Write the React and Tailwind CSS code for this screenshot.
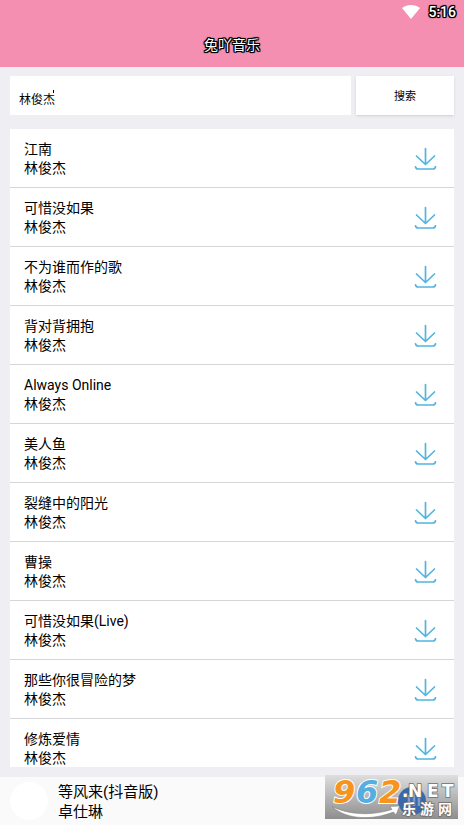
import { useState } from 'react';

const ARTIST = '林俊杰';

const SONGS = [
  '江南',
  '可惜没如果',
  '不为谁而作的歌',
  '背对背拥抱',
  'Always Online',
  '美人鱼',
  '裂缝中的阳光',
  '曹操',
  '可惜没如果(Live)',
  '那些你很冒险的梦',
  '修炼爱情',
];

const OUTLINE =
  '[text-shadow:1px_0_#000,-1px_0_#000,0_1px_#000,0_-1px_#000,1px_1px_#000,-1px_-1px_#000,1px_-1px_#000,-1px_1px_#000,0_0_2px_#000,0_0_2px_#000,0_0_2px_#000]';

function DownloadIcon() {
  return (
    <svg width="24" height="24" viewBox="0 0 24 24" fill="none" stroke="#52b4df" strokeWidth="1.700" strokeLinecap="round" strokeLinejoin="round">
      <path d="M12.500 1.500v15.500M3.500 9l9 8.500 9-8.500" />
      <path d="M2.500 19.800c.4 1.700 1.200 2.200 2.700 2.200h14.600c1.500 0 2.300-.5 2.700-2.200" />
    </svg>
  );
}

function Watermark() {
  return (
    <svg className="block h-11 w-[133px] overflow-visible" viewBox="0 0 133 44" role="img" aria-label="962.NET 乐游网">
      <defs>
        <linearGradient id="plate" x1="0" y1="0" x2="0" y2="1">
          <stop offset="0" stopColor="#dededf" />
          <stop offset="1" stopColor="#8e8e8e" />
        </linearGradient>
      </defs>
      <rect width="133" height="44" fill="url(#plate)" />
      <circle cx="87" cy="26" r="14" fill="#3a68ad" />
      <path d="M84 31V20M89 31V17M94 31v-9" stroke="#7f9dcb" strokeWidth="2.500" />
      <g fontFamily="'DejaVu Sans', sans-serif" fontWeight="700" fontStyle="italic" fontSize="32" stroke="#fff" strokeWidth="2" paintOrder="stroke">
        <text x="8" y="28" fill="#f7941d">9</text>
        <text x="31" y="28" fill="#56ade0">6</text>
        <text x="54" y="28" fill="#f7941d">2</text>
      </g>
      <path d="M7 31.500c18 9 41 9 60 3l-2-3 9.500-.5-3.500 9-2.500-3c-20 8-46 8.500-61.500-5.500z" fill="#fff" stroke="#777" strokeWidth=".5" />
      <g fill="#fff" stroke="#6d6d6d" strokeWidth="1.500" paintOrder="stroke" fontWeight="700">
        <g fontFamily="'DejaVu Sans', sans-serif" fontSize="17">
          <text x="77" y="22">.</text>
          <text x="83" y="22">N</text>
          <text x="102" y="22">E</text>
          <text x="117" y="22">T</text>
        </g>
        <g fontFamily="'Noto Sans CJK SC', sans-serif" fontSize="14">
          <text x="77" y="39">乐</text>
          <text x="95" y="39">游</text>
          <text x="113" y="39">网</text>
        </g>
      </g>
    </svg>
  );
}

function SongRow({ title }) {
  return (
    <li className="flex items-start justify-between border-b border-[#d6d6d8] px-[14px] pt-[11px] pb-[9px]">
      <div className="min-w-0">
        <p className="truncate">{title}</p>
        <p className="truncate">{ARTIST}</p>
      </div>
      <button type="button" aria-label={`下载 ${title}`} className="mt-[7px] mr-[3px]">
        <DownloadIcon />
      </button>
    </li>
  );
}

function App() {
  const [keyword, setKeyword] = useState(ARTIST);

  return (
    <div className="flex h-screen flex-col bg-[#efeef3] font-[Roboto,'Noto_Sans_CJK_SC',sans-serif] text-sm text-black">
      <header className="shrink-0 bg-[#f48fb1] pb-3 text-white">
        <div className="flex h-6 items-center justify-end gap-2 pr-2">
          <svg width="18" height="14" viewBox="0 0 18 14" fill="#fff">
            <path d="M9 14 0 3c5-4 13-4 18 0z" />
          </svg>
          <span className={`font-medium ${OUTLINE}`}>5:16</span>
        </div>
        <h1 className={`pt-[11px] text-center leading-5 ${OUTLINE}`}>兔吖音乐</h1>
      </header>

      <form className="flex shrink-0 gap-[5px] px-[10px] pt-[9px] pb-[14px]" onSubmit={(e) => e.preventDefault()}>
        <div className="relative h-[39px] min-w-0 flex-1">
          <input
            type="text"
            aria-label="搜索歌曲"
            value={keyword}
            onChange={(e) => setKeyword(e.target.value)}
            className="h-full w-full bg-white px-[9px] pt-[6px] text-xs outline-none"
          />
          {/* tip of the caret */}
          <span className="absolute top-[14px] left-[43px] h-[3px] w-px bg-black" />
        </div>
        <button type="submit" className="w-[98px] bg-white pt-[2px] text-[11px] shadow-sm">
          搜索
        </button>
      </form>

      <ul className="mx-[10px] min-h-0 flex-1 overflow-hidden bg-white leading-[19px]">
        {SONGS.map((title) => (
          <SongRow key={title} title={title} />
        ))}
      </ul>

      <footer className="relative mt-[10px] flex h-12 shrink-0 items-center gap-[10px] bg-[#fafafa] px-[10px] text-[15px] leading-5">
        <div className="size-[38px] shrink-0 rounded-full bg-white" />
        <div className="min-w-0 pt-[2px]">
          <p className="truncate">等风来(抖音版)</p>
          <p className="truncate">卓仕琳</p>
        </div>
        <div className="absolute right-[6px] bottom-[6px]">
          <Watermark />
        </div>
      </footer>
    </div>
  );
}

export default App;
